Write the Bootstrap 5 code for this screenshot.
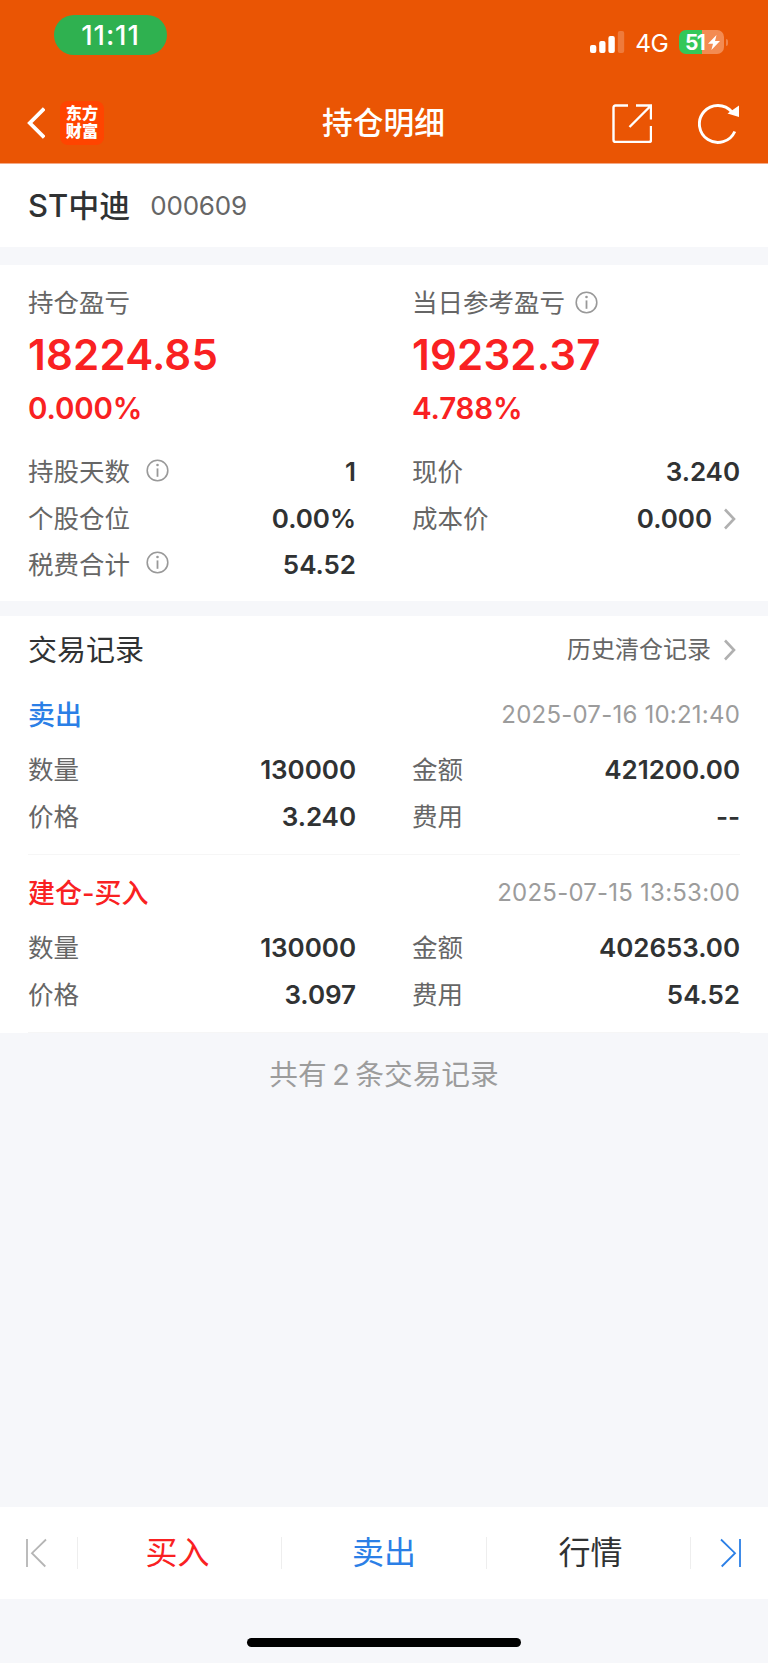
<!DOCTYPE html>
<html lang="zh-CN">
<head>
<meta charset="utf-8">
<meta name="viewport" content="width=device-width, initial-scale=1">
<title>持仓明细</title>
<link href="https://cdn.jsdelivr.net/npm/bootstrap@5.3.0/dist/css/bootstrap.min.css" rel="stylesheet">
<style>
  :root { --up:#f92122; --down:#2b7fe6; --ink:#303233; --sub:#666; --mute:#9c9c9c; --page:#f6f7fa; }
  body { font-family: Inter, "Noto Sans CJK SC", sans-serif; background: var(--page); color: var(--ink); line-height: 1; }
  svg { display: block; flex: none; }
  .screen { width: 768px; height: 1663px; overflow: hidden; }
  .top-area { background: #ea5504; height: 164px; border-bottom: 1px solid #f4a985; color: #fff; }
  .status { height: 82px; padding: 15px 40px 0 54px; }
  .clock { width: 113px; height: 40px; background: #2fb150; font-size: 27.5px; font-weight: 500; letter-spacing: .9px; padding-top: 1px; }
  .signal-set { margin-top: 15px; height: 24px; }
  .net { font-size: 24.5px; margin: 2px 11px 0 10px; letter-spacing: -.7px; }
  .battery { width: 45px; height: 24px; border-radius: 7px; background: linear-gradient(90deg, #34c759 51%, #f38b52 51%); font-size: 21px; font-weight: 700; padding-left: 6px; letter-spacing: -1.6px; }
  .cap { width: 2px; height: 7px; border-radius: 0 2px 2px 0; background: #f0834a; margin: 0 0 0 2px; }
  .title-row { height: 81px; padding: 0 28px 0 27px; }
  .side { width: 140px; }
  .logo { width: 44px; height: 44px; border-radius: 8px; background: #ff4400; font: 900 16.2px/18.7px "Noto Sans CJK SC", sans-serif; padding: 2px 0 0 0; margin-left: 15px; }
  .page-title { font-size: 30.7px; font-weight: 500; padding-top: 2px; }
  .stock { height: 83px; padding: 0 28px 2px; }
  .stock-name { font-size: 31px; font-weight: 500; letter-spacing: 0; }
  .stock-code { font-size: 26px; color: var(--sub); margin-left: 20px; letter-spacing: -.2px; }
  .panel { background: #fff; padding: 0 28px; }
  .profit { margin-top: 18px; height: 336px; padding-top: 15px; }
  .pair { display: grid; grid-template-columns: 328px 328px; column-gap: 56px; }
  .lbl { font-size: 25.5px; color: var(--sub); }
  .h-lbl { height: 46px; }
  .big { height: 56px; font-size: 42px; font-weight: 600; color: var(--up); letter-spacing: .2px; padding-top: 2px; }
  .pct { height: 53px; font-size: 29.5px; font-weight: 600; color: var(--up); margin-bottom: 14px; letter-spacing: -.15px; padding-top: 1px; }
  .line { height: 46.4px; }
  .val { font-size: 26px; font-weight: 600; letter-spacing: -.05px; }
  .records { margin-top: 15px; }
  .rec-title { height: 61px; padding-top: 7px; font-size: 29px; }
  .more { font-size: 24px; color: var(--sub); }
  .rec { height: 178px; padding-top: 5px; border-bottom: 1px solid #f6f6f6; }
  .rec-head { height: 65px; font-size: 27px; font-weight: 500; padding-top: 1px; }
  .stamp { font-size: 24px; font-weight: 400; color: var(--mute); letter-spacing: .22px; }
  .count { font-size: 28.7px; color: var(--mute); height: 84px; word-spacing: -2.5px; }
  .tabs { height: 91.5px; background: #fff; font-size: 32px; }
  .tab-end { width: 77px; }
  .tab-side { width: 203px; }
  .sep { width: 1px; height: 32px; background: #eee; }
  .home { height: 64.5px; padding-top: 39px; }
  .home-bar { width: 274px; height: 9.5px; background: #000; }
  .up { color: var(--up); } .down { color: var(--down); }
</style>
</head>
<body>
<div class="screen d-flex flex-column">
  <header class="top-area">
    <div class="status d-flex justify-content-between align-items-start">
      <div class="clock rounded-pill d-flex align-items-center justify-content-center">11:11</div>
      <div class="signal-set d-flex align-items-center">
        <svg width="35" height="24" viewBox="0 0 35 24" fill="#fff"><rect x="0" y="15" width="6.3" height="8" rx="2"/><rect x="9.200" y="11" width="6.3" height="12" rx="2"/><rect x="18.4" y="6" width="6.4" height="17" rx="2"/><rect x="27.8" y="1" width="6.4" height="22" rx="2" opacity=".22"/></svg>
        <span class="net">4G</span>
        <div class="battery d-flex align-items-center">51<svg width="12" height="15" viewBox="0 0 12 15" class="ms-1" fill="#fff"><path d="M8.5 0 0 8.700h5L3.4 15 12 6H7z"/></svg></div>
        <div class="cap"></div>
      </div>
    </div>
    <nav class="title-row d-flex align-items-center justify-content-between">
      <div class="side d-flex align-items-center">
        <svg width="18" height="32" viewBox="0 0 18 32" fill="none" stroke="#fff" stroke-width="3.8"><path d="M17.2 1.5 2.8 16l14.4 14.5"/></svg>
        <div class="logo text-center">东方<br>财富</div>
      </div>
      <div class="page-title">持仓明细</div>
      <div class="side d-flex align-items-center justify-content-end">
        <svg width="40" height="40" viewBox="0 0 40 40" fill="none" stroke="#fff" stroke-width="2.4"><path d="M16 2.500H3.500Q1.500 2.500 1.500 4.500v32.500q0 2 2 2H37q2 0 2-2V23M24 2.500h15v14M39 2.500 17.500 24"/></svg>
        <svg width="42" height="42" viewBox="0 0 42 42" fill="none" stroke="#fff" stroke-width="2.9" style="margin-left:46px"><path d="M36.800 29.500A18.500 18.500 0 1 1 34 10"/><path d="M41 3.500V15L29.500 11.500z" fill="#fff" stroke="none"/></svg>
      </div>
    </nav>
  </header>

  <section class="panel stock d-flex align-items-center">
    <span class="stock-name">ST中迪</span><span class="stock-code">000609</span>
  </section>

  <section class="panel profit">
    <div class="pair">
      <div class="h-lbl lbl d-flex align-items-center">持仓盈亏</div>
      <div class="h-lbl lbl d-flex align-items-center">当日参考盈亏
        <svg style="margin:0 0 1px 10px" width="23" height="23" viewBox="0 0 23 23"><use href="#info"/></svg></div>
      <div class="big d-flex align-items-center">18224.85</div>
      <div class="big d-flex align-items-center">19232.37</div>
      <div class="pct d-flex align-items-center">0.000%</div>
      <div class="pct d-flex align-items-center">4.788%</div>
      <div class="line d-flex align-items-center"><span class="lbl">持股天数</span><svg class="ms-3 mb-1" width="23" height="23" viewBox="0 0 23 23"><use href="#info"/></svg><span class="val ms-auto">1</span></div>
      <div class="line d-flex align-items-center"><span class="lbl">现价</span><span class="val ms-auto">3.240</span></div>
      <div class="line d-flex align-items-center"><span class="lbl">个股仓位</span><span class="val ms-auto">0.00%</span></div>
      <div class="line d-flex align-items-center"><span class="lbl">成本价</span><span class="val ms-auto">0.000</span><svg width="28" height="22" viewBox="0 0 28 22"><use href="#next"/></svg></div>
      <div class="line d-flex align-items-center"><span class="lbl">税费合计</span><svg class="ms-3 mb-1" width="23" height="23" viewBox="0 0 23 23"><use href="#info"/></svg><span class="val ms-auto">54.52</span></div>
    </div>
  </section>

  <section class="panel records">
    <div class="rec-title d-flex align-items-center justify-content-between">
      <span>交易记录</span>
      <span class="more d-flex align-items-center">历史清仓记录<svg width="29" height="22" viewBox="-1 0 29 22"><use href="#next"/></svg></span>
    </div>
    <article class="rec">
      <div class="rec-head d-flex align-items-center justify-content-between"><span class="down">卖出</span><span class="stamp">2025-07-16 10:21:40</span></div>
      <div class="pair">
        <div class="line d-flex align-items-center justify-content-between"><span class="lbl">数量</span><span class="val">130000</span></div>
        <div class="line d-flex align-items-center justify-content-between"><span class="lbl">金额</span><span class="val">421200.00</span></div>
        <div class="line d-flex align-items-center justify-content-between"><span class="lbl">价格</span><span class="val">3.240</span></div>
        <div class="line d-flex align-items-center justify-content-between"><span class="lbl">费用</span><span class="val">--</span></div>
      </div>
    </article>
    <article class="rec">
      <div class="rec-head d-flex align-items-center justify-content-between"><span class="up">建仓-买入</span><span class="stamp">2025-07-15 13:53:00</span></div>
      <div class="pair">
        <div class="line d-flex align-items-center justify-content-between"><span class="lbl">数量</span><span class="val">130000</span></div>
        <div class="line d-flex align-items-center justify-content-between"><span class="lbl">金额</span><span class="val">402653.00</span></div>
        <div class="line d-flex align-items-center justify-content-between"><span class="lbl">价格</span><span class="val">3.097</span></div>
        <div class="line d-flex align-items-center justify-content-between"><span class="lbl">费用</span><span class="val">54.52</span></div>
      </div>
    </article>
  </section>
  <div class="count d-flex align-items-center justify-content-center">共有 2 条交易记录</div>

  <nav class="tabs mt-auto d-flex align-items-center">
    <div class="tab-end"><svg width="77" height="30" viewBox="0 0 77 30" fill="none" stroke="#b5b5b5" stroke-width="1.8"><path d="M27 1v28M46 1.5 32 15.2 45.3 28.5"/></svg></div>
    <div class="sep"></div>
    <div class="tab-side up text-center pe-1">买入</div>
    <div class="sep"></div>
    <div class="down flex-fill text-center">卖出</div>
    <div class="sep"></div>
    <div class="tab-side text-center ps-1">行情</div>
    <div class="sep"></div>
    <div class="tab-end"><svg width="77" height="30" viewBox="0 0 77 30" fill="none" stroke="#2b7fe6" stroke-width="1.8"><path d="M49 1v28M30 1.5 44 15.2 30.7 28.5"/></svg></div>
  </nav>
  <div class="home d-flex justify-content-center align-items-start"><div class="home-bar rounded-pill"></div></div>
</div>

<svg width="0" height="0" aria-hidden="true">
  <defs>
    <g id="info"><circle cx="11.5" cy="11.5" r="10.3" fill="none" stroke="#999" stroke-width="1.6"/><path d="M11.5 9.4v8.4" stroke="#999" stroke-width="1.8"/><circle cx="11.5" cy="6" r="1.3" fill="#999"/></g>
    <path id="next" d="M13 1.5 22 11l-9 9.5" fill="none" stroke="#b0b0b0" stroke-width="2.6"/>
  </defs>
</svg>
<script src="https://cdn.jsdelivr.net/npm/bootstrap@5.3.0/dist/js/bootstrap.bundle.min.js"></script>
</body>
</html>
